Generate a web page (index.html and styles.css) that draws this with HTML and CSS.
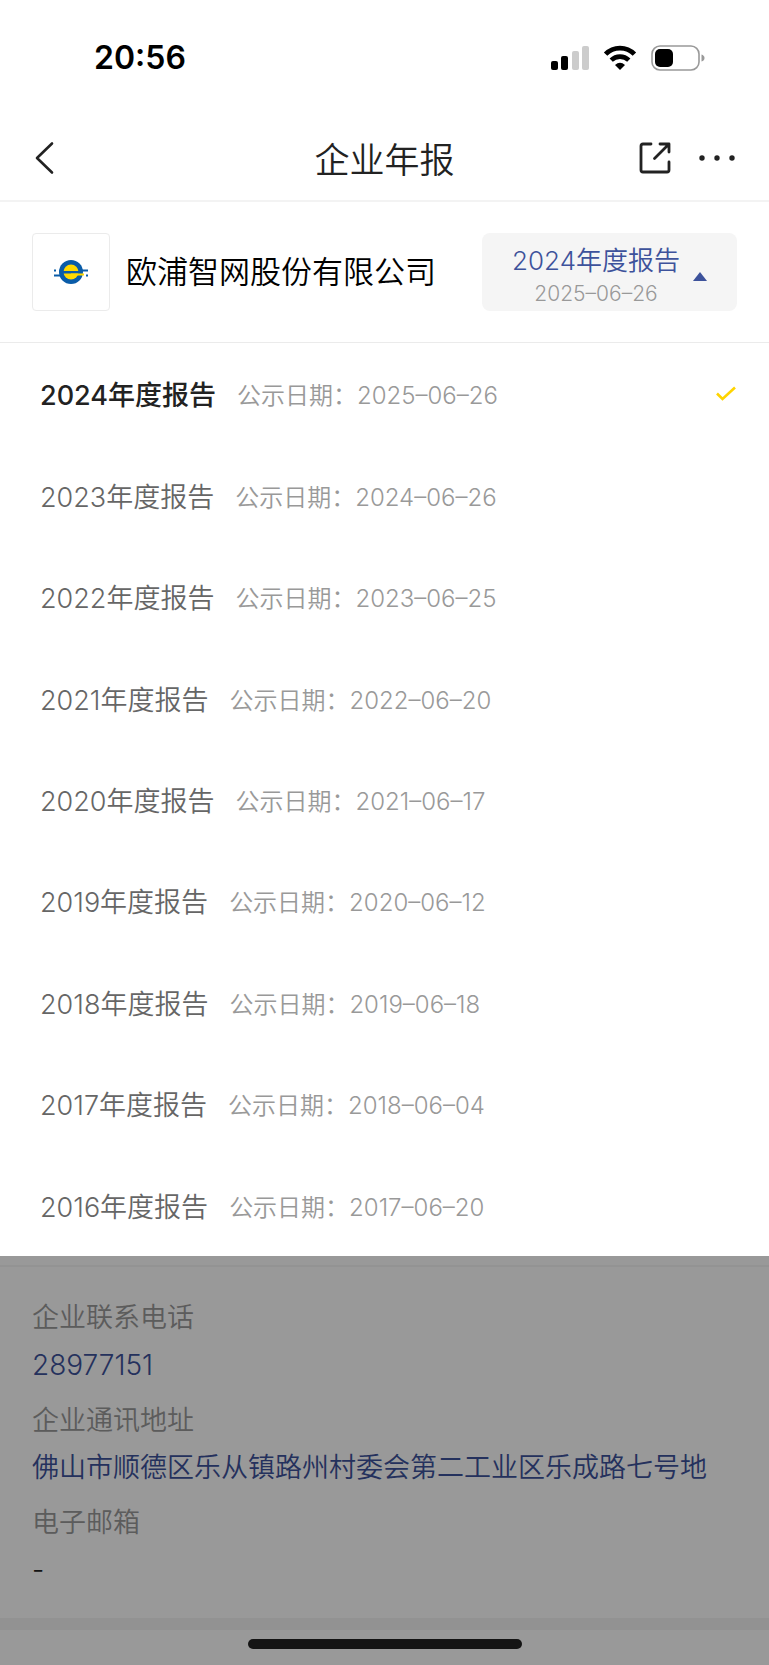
FILE: index.html
```html
<!DOCTYPE html>
<html lang="zh-CN">
<head>
    <meta charset="UTF-8">
    <meta name="viewport" content="width=device-width, initial-scale=1.0">
    <title>企业年报</title>
    <link rel="stylesheet" href="styles.css">
</head>
<body>
    <div class="status-bar">
        <span class="time">20:56</span>
        <div class="status-icons">
            <svg width="38" height="26" viewBox="0 0 38 26">
                <rect x="0" y="16" width="7" height="9" rx="2"/>
                <rect x="10" y="11" width="7" height="14" rx="2"/>
                <rect x="21" y="6" width="7" height="19" rx="2" fill="#ccc"/>
                <rect x="31" y="1" width="7" height="24" rx="2" fill="#ccc"/>
            </svg>
            <svg width="34" height="26" viewBox="0 0 34 26">
                <path d="M2.600 9.2A20 20 0 0 1 31.400 9.2" fill="none" stroke="#000" stroke-width="4.8"/>
                <path d="M8.200 15.200A12.600 12.600 0 0 1 25.800 15.200" fill="none" stroke="#000" stroke-width="4.6"/>
                <path d="M12 20Q17 15.600 22 20L17 25Z"/>
            </svg>
            <svg width="54" height="26" viewBox="0 0 54 26">
                <rect x="1" y="1" width="47" height="24" rx="8" fill="none" stroke="#999" stroke-width="1.6"/>
                <rect x="4" y="4" width="18" height="18" rx="5"/>
                <path d="M50.500 9.500Q53.500 10.500 53.500 13T50.500 16.500Z" fill="#999"/>
            </svg>
        </div>
    </div>

    <header class="nav">
        <button class="icon-button" aria-label="返回">
            <svg width="22" height="34" viewBox="0 0 22 34">
                <path d="M18 2.500L3 17L18 31.500" fill="none" stroke="#222" stroke-width="2.600" stroke-linecap="round" stroke-linejoin="round"/>
            </svg>
        </button>
        <h1>企业年报</h1>
        <div class="nav-actions">
            <button class="icon-button" aria-label="分享">
                <svg width="32" height="32" viewBox="0 0 32 32" fill="none" stroke="#222" stroke-width="2.800" stroke-linecap="round" stroke-linejoin="round">
                    <path d="M12 2H4Q2 2 2 4V28Q2 30 4 30H28Q30 30 30 28V20"/>
                    <path d="M21 2H30V10M30 2L15.500 16.500"/>
                </svg>
            </button>
            <button class="icon-button" aria-label="更多">
                <svg width="36" height="8" viewBox="0 0 36 8" fill="#222">
                    <circle cx="3" cy="4" r="2.700"/>
                    <circle cx="18" cy="4" r="2.700"/>
                    <circle cx="33" cy="4" r="2.700"/>
                </svg>
            </button>
        </div>
    </header>

    <section class="company">
        <div class="logo">
            <svg width="36" height="26" viewBox="0 0 36 26">
                <circle cx="18" cy="13" r="12" fill="#0a5ca8"/>
                <circle cx="18" cy="13" r="7.500" fill="#ffd900"/>
                <path d="M9 12H29V14.500H9Z" fill="#0a5ca8"/>
                <path d="M18 14.500H31V16.500H24Q22 18 18 18Z" fill="#ffd900"/>
                <path d="M1 15.500H8V17.500H1ZM28 10.500H35V12.500H28ZM1 10.500H3V12.500H1ZM33 15.500H35V17.500H33Z" fill="#0a5ca8"/>
            </svg>
        </div>
        <h2>欧浦智网股份有限公司</h2>
        <button class="year-button" aria-expanded="true">
            <span class="year-text">
                <span class="year-name">2024年度报告</span>
                <span class="year-date">2025–06–26</span>
            </span>
            <span class="arrow-up"></span>
        </button>
    </section>

    <ul class="report-list">
        <li>
            <button class="report active">
                <span class="report-name">2024年度报告</span>
                <span class="report-date">公示日期：2025–06–26</span>
                <svg class="check" width="20" height="16" viewBox="0 0 20 16">
                    <path d="M1 7.500L6.500 13L19 1.500" fill="none" stroke="#ffd400" stroke-width="2.600"/>
                </svg>
            </button>
        </li>
        <li><button class="report"><span class="report-name">2023年度报告</span><span class="report-date">公示日期：2024–06–26</span></button></li>
        <li><button class="report"><span class="report-name">2022年度报告</span><span class="report-date">公示日期：2023–06–25</span></button></li>
        <li><button class="report"><span class="report-name">2021年度报告</span><span class="report-date">公示日期：2022–06–20</span></button></li>
        <li><button class="report"><span class="report-name">2020年度报告</span><span class="report-date">公示日期：2021–06–17</span></button></li>
        <li><button class="report"><span class="report-name">2019年度报告</span><span class="report-date">公示日期：2020–06–12</span></button></li>
        <li><button class="report"><span class="report-name">2018年度报告</span><span class="report-date">公示日期：2019–06–18</span></button></li>
        <li><button class="report"><span class="report-name">2017年度报告</span><span class="report-date">公示日期：2018–06–04</span></button></li>
        <li><button class="report"><span class="report-name">2016年度报告</span><span class="report-date">公示日期：2017–06–20</span></button></li>
    </ul>

    <main class="details">
        <dl class="contact">
            <div>
                <dt>企业联系电话</dt>
                <dd><a class="phone" href="tel:28977151">28977151</a></dd>
            </div>
            <div>
                <dt>企业通讯地址</dt>
                <dd><a href="#map">佛山市顺德区乐从镇路州村委会第二工业区乐成路七号地</a></dd>
            </div>
            <div>
                <dt>电子邮箱</dt>
                <dd>-</dd>
            </div>
        </dl>
        <div class="home-area">
            <div class="home-indicator"></div>
        </div>
    </main>
</body>
</html>
```
FILE: styles.css
```css
* {
    box-sizing: border-box;
}
body {
    margin: 0;
    min-height: 100vh;
    display: flex;
    flex-direction: column;
    background: #fff;
    color: #222;
    font-family: Inter, "Noto Sans CJK SC", sans-serif;
    font-weight: 350;
}
h1, h2, ul, dl, dd {
    margin: 0;
    padding: 0;
    font-weight: 350;
}
button {
    border: none;
    padding: 0;
    background: none;
    color: inherit;
    font: inherit;
    cursor: pointer;
}
svg {
    display: block;
}
a {
    color: #3d529b;
    text-decoration: none;
}

/* status bar */
.status-bar {
    height: 115px;
    padding: 0 64px 0 94px;
    display: flex;
    align-items: center;
    justify-content: space-between;
}
.time {
    color: #000;
    font-size: 32px;
    font-weight: 600;
}
.status-icons {
    display: flex;
    gap: 14px;
}

/* title bar */
.nav {
    height: 87px;
    padding: 0 32px;
    display: grid;
    grid-template-columns: 1fr auto 1fr;
    align-items: center;
    border-bottom: 2px solid #f3f3f3;
}
.nav .icon-button {
    justify-self: start;
    padding: 2px;
}
h1 {
    padding-top: 4px;
    font-size: 35px;
    line-height: 48px;
}
.nav-actions {
    display: flex;
    align-items: center;
    justify-content: flex-end;
    gap: 24px;
}

/* company */
.company {
    padding: 31px 32px;
    display: flex;
    align-items: center;
    border-bottom: 1px solid #ebebeb;
}
.logo {
    width: 78px;
    height: 78px;
    display: flex;
    align-items: center;
    justify-content: center;
    border: 1px solid #ebebeb;
    border-radius: 4px;
}
h2 {
    margin-left: 16px;
    color: #000;
    font-size: 31px;
    line-height: 46px;
    white-space: nowrap;
}
.year-button {
    height: 78px;
    margin-left: auto;
    padding: 8px 30px 0;
    display: flex;
    align-items: center;
    gap: 13px;
    border-radius: 8px;
    background: #f5f5f5;
}
.year-text {
    display: flex;
    flex-direction: column;
    align-items: center;
}
.year-name {
    color: #3d529b;
    font-size: 26px;
    line-height: 36px;
}
.year-date {
    color: #999;
    font-size: 21px;
    line-height: 30px;
}
.arrow-up {
    border: 7px solid transparent;
    border-top: none;
    border-bottom: 9px solid #3d529b;
}

/* year menu */
.report-list {
    flex: 1;
    display: grid;
    grid-auto-rows: 1fr;
    list-style: none;
}
.report {
    width: 100%;
    height: 100%;
    padding: 0 33px 0 40px;
    display: flex;
    align-items: center;
    gap: 21px;
}
.report-name {
    color: #666;
    font-size: 27px;
}
.report-date {
    color: #999;
    font-size: 24px;
}
.active .report-name {
    color: #222;
    font-weight: 500;
}
.check {
    margin-left: auto;
}

/* page under the mask */
.details {
    position: relative;
    padding-top: 9px;
}
.details::after {
    content: "";
    position: absolute;
    inset: 0;
    background: rgba(0, 0, 0, 0.4);
    pointer-events: none;
}
.contact {
    padding: 28px 32px 24px;
    display: flex;
    flex-direction: column;
    gap: 8px;
    border-top: 2px solid #f5f5f5;
    border-bottom: 12px solid #f3f3f3;
    font-size: 27px;
}
dt {
    color: #999;
    line-height: 46px;
}
dd {
    line-height: 48px;
}
.phone {
    font-size: 28px;
}
.home-area {
    height: 35px;
    padding-top: 9px;
}
.home-indicator {
    width: 274px;
    height: 10px;
    margin: 0 auto;
    border-radius: 5px;
    background: #222;
}
```
